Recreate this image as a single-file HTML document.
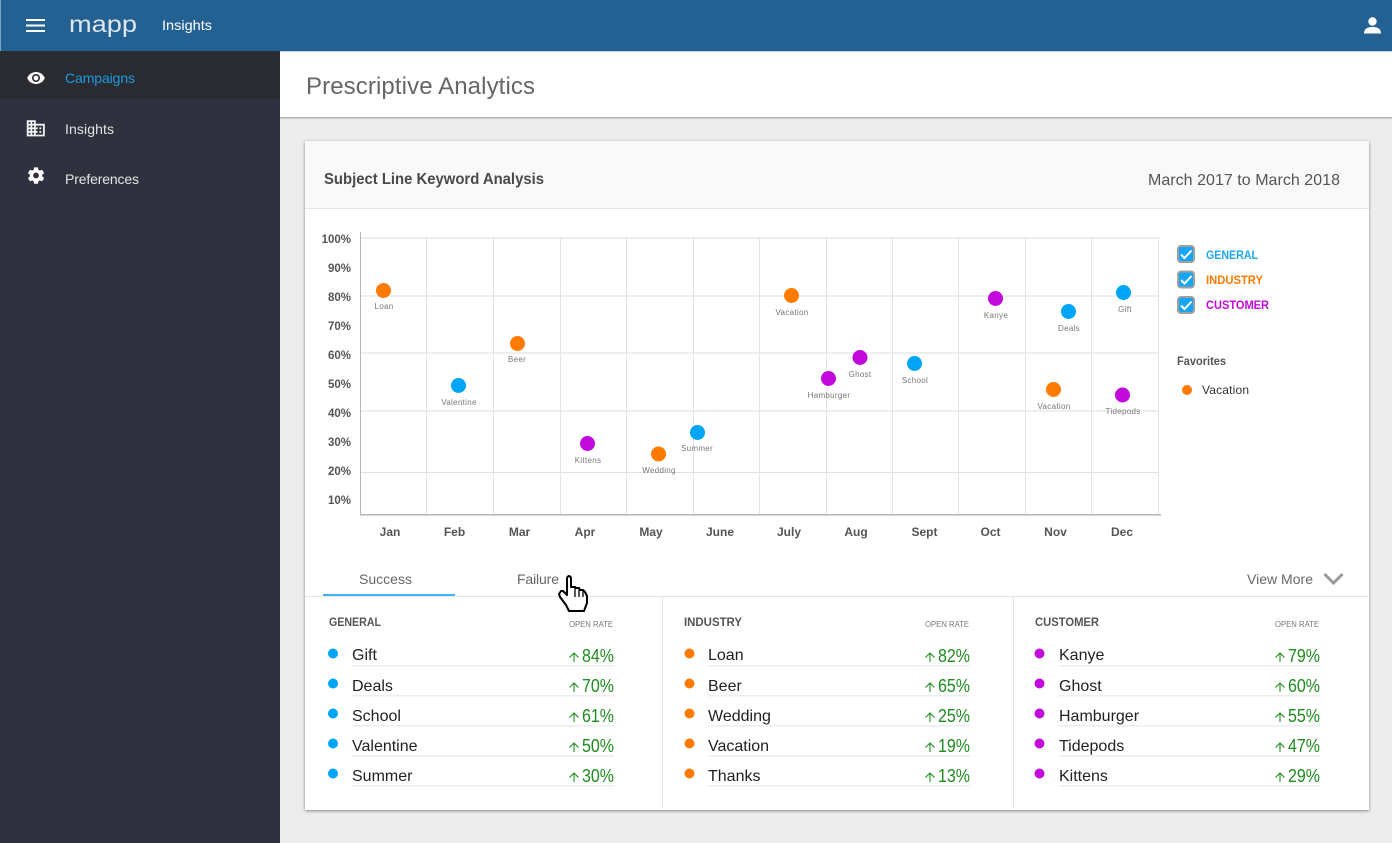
<!DOCTYPE html>
<html lang="en"><head><meta charset="utf-8"><title>Prescriptive Analytics</title>
<style>
html,body{margin:0;padding:0;width:1392px;height:843px;overflow:hidden;background:#ededed;font-family:"Liberation Sans",sans-serif}
.a{position:absolute}
svg{position:absolute;left:0;top:0}
text{font-family:"Liberation Sans",sans-serif}
.ax{font-size:12px;font-weight:bold;fill:#555}
.ay{font-size:11.500px;font-weight:bold;fill:#555;text-anchor:end}
.lb{font-size:8px;fill:#777;text-anchor:middle;letter-spacing:.3px}
.nm{font-size:16px;fill:#222}
.pc{font-size:18px;fill:#1e8c1e}
.hd{font-size:12px;font-weight:bold;fill:#555}
.or{font-size:8px;fill:#777}
.ul{fill:#eeeeee}
.arr{fill:none;stroke:#1e8c1e;stroke-width:1.100}
.b{fill:#00a5f7}.o{fill:#ff7a00}.p{fill:#c209dc}
</style></head><body>
<div class="a" style="left:0;top:0;width:1392px;height:51px;background:#236193"></div>
<div class="a" style="left:0;top:0;width:1px;height:51px;background:#7fa3c0"></div>
<div class="a" style="left:280px;top:51px;width:1112px;height:67px;background:#fff;border-bottom:1px solid #b5b5b5;border-top:1px solid #b7cbdb;box-sizing:border-box;box-shadow:0 1px 1px rgba(0,0,0,.14)"></div>
<div class="a" style="left:0;top:51px;width:280px;height:792px;background:#2f323e"></div>
<div class="a" style="left:0;top:51px;width:280px;height:48px;background:#2a2b30"></div>
<div class="a" style="left:305px;top:141px;width:1064px;height:669px;background:#fff;box-shadow:0 1px 3px rgba(0,0,0,.45)"></div>
<div class="a" style="left:305px;top:141px;width:1064px;height:68px;background:#f9f9f9;border-bottom:1px solid #e4e4e4;box-sizing:border-box"></div>
<svg width="1392" height="843" viewBox="0 0 1392 843">
<!-- top bar -->
<rect x="26" y="19" width="19" height="2" fill="#fff"/><rect x="26" y="24.500" width="19" height="2" fill="#fff"/><rect x="26" y="30" width="19" height="2" fill="#fff"/>
<text x="69" y="32" font-size="23" fill="#fff" opacity=".85" textLength="68" lengthAdjust="spacingAndGlyphs">mapp</text>
<text x="162" y="30" font-size="14" fill="#fff" textLength="50" lengthAdjust="spacingAndGlyphs">Insights</text>
<circle cx="1372.500" cy="21.500" r="4.200" fill="#fff"/>
<path d="M1364 33.500Q1364 27 1372.500 27Q1381 27 1381 33.500Z" fill="#fff"/>
<!-- sidebar -->
<path transform="translate(26.400 68.400) scale(.8)" fill="#fff" d="M12 4.500C7 4.500 2.730 7.610 1 12c1.730 4.390 6 7.500 11 7.500s9.270-3.110 11-7.500c-1.730-4.390-6-7.500-11-7.500zM12 17c-2.760 0-5-2.240-5-5s2.240-5 5-5 5 2.240 5 5-2.240 5-5 5zm0-8c-1.660 0-3 1.340-3 3s1.340 3 3 3 3-1.340 3-3-1.340-3-3-3z"/>
<path transform="translate(25 117.500) scale(.9)" fill="#f2f2f2" d="M12 7V3H2v18h20V7H12zM6 19H4v-2h2v2zm0-4H4v-2h2v2zm0-4H4V9h2v2zm0-4H4V5h2v2zm4 12H8v-2h2v2zm0-4H8v-2h2v2zm0-4H8V9h2v2zm0-4H8V5h2v2zm10 12h-8v-2h2v-2h-2v-2h2v-2h-2V9h8v10zm-2-8h-2v2h2v-2zm0 4h-2v2h2v-2z"/>
<path transform="translate(26.200 165.700) scale(.82)" fill="#fff" d="M19.430 12.980c.04-.32.07-.64.07-.98s-.03-.66-.07-.98l2.110-1.650c.19-.15.24-.42.12-.64l-2-3.460c-.12-.22-.39-.3-.61-.22l-2.490 1c-.52-.4-1.080-.73-1.690-.98l-.38-2.650C14.460 2.180 14.250 2 14 2h-4c-.25 0-.46.18-.49.42l-.38 2.650c-.61.25-1.170.59-1.690.98l-2.490-1c-.23-.09-.49 0-.61.22l-2 3.460c-.13.22-.07.49.12.64l2.110 1.650c-.04.32-.07.65-.07.98s.03.66.07.98l-2.110 1.650c-.19.15-.24.42-.12.64l2 3.460c.12.22.39.3.61.22l2.490-1c.52.4 1.080.73 1.690.98l.38 2.650c.03.24.24.42.49.42h4c.25 0 .46-.18.49-.42l.38-2.650c.61-.25 1.170-.59 1.690-.98l2.490 1c.23.09.49 0 .61-.22l2-3.460c.12-.22.07-.49-.12-.64l-2.110-1.650zM12 15.500c-1.930 0-3.500-1.570-3.500-3.500s1.570-3.500 3.500-3.500 3.500 1.570 3.500 3.500-1.570 3.500-3.500 3.500z"/>
<text x="65" y="83" font-size="14" fill="#1a9ae0" textLength="70">Campaigns</text>
<text x="65" y="134" font-size="14" fill="#e4e4e4" textLength="49">Insights</text>
<text x="65" y="184" font-size="14" fill="#e4e4e4" textLength="74">Preferences</text>
<!-- headings -->
<text x="306" y="94" font-size="24" fill="#666" textLength="229">Prescriptive Analytics</text>
<text x="324" y="184" font-size="16" font-weight="bold" fill="#4a4a4a" textLength="220" lengthAdjust="spacingAndGlyphs">Subject Line Keyword Analysis</text>
<text x="1148" y="185" font-size="16" fill="#555" textLength="192">March 2017 to March 2018</text>
<!-- grid -->
<g fill="#eeeeee"><rect x="361" y="237" width="798" height="2"/><rect x="361" y="295" width="798" height="2"/><rect x="361" y="352" width="798" height="2"/><rect x="361" y="410" width="798" height="2"/><rect x="361" y="472" width="798" height="1" fill="#e2e2e2"/></g>
<g fill="#e4e4e4"><rect x="426" y="237" width="1" height="277"/><rect x="493" y="237" width="1" height="277"/><rect x="560" y="237" width="1" height="277"/><rect x="626" y="237" width="1" height="277"/><rect x="693" y="237" width="1" height="277"/><rect x="759" y="237" width="1" height="277"/><rect x="826" y="237" width="1" height="277"/><rect x="892" y="237" width="1" height="277"/><rect x="958" y="237" width="1" height="277"/><rect x="1025" y="237" width="1" height="277"/><rect x="1091" y="237" width="1" height="277"/><rect x="1158" y="237" width="1" height="277"/></g>
<rect x="360" y="232" width="1" height="283" fill="#b5b5b5"/><rect x="360" y="514" width="801" height="1.500" fill="#b5b5b5"/>
<g><text class="ay" x="351" y="243">100%</text><text class="ay" x="351" y="272">90%</text><text class="ay" x="351" y="301">80%</text><text class="ay" x="351" y="330">70%</text><text class="ay" x="351" y="359">60%</text><text class="ay" x="351" y="388">50%</text><text class="ay" x="351" y="417">40%</text><text class="ay" x="351" y="446">30%</text><text class="ay" x="351" y="475">20%</text><text class="ay" x="351" y="504">10%</text></g>
<g text-anchor="middle"><text class="ax" x="390" y="536">Jan</text><text class="ax" x="454.500" y="536">Feb</text><text class="ax" x="519.500" y="536">Mar</text><text class="ax" x="585" y="536">Apr</text><text class="ax" x="651" y="536">May</text><text class="ax" x="720" y="536">June</text><text class="ax" x="789" y="536">July</text><text class="ax" x="856" y="536">Aug</text><text class="ax" x="924.500" y="536">Sept</text><text class="ax" x="990.500" y="536">Oct</text><text class="ax" x="1055.500" y="536">Nov</text><text class="ax" x="1122" y="536">Dec</text></g>
<!-- points -->
<circle class="o" cx="383.500" cy="290.500" r="7.500"/><text class="lb" x="384" y="309">Loan</text>
<circle class="b" cx="458.500" cy="385.500" r="7.500"/><text class="lb" x="459" y="405">Valentine</text>
<circle class="o" cx="517.500" cy="343.500" r="7.500"/><text class="lb" x="517" y="362">Beer</text>
<circle class="p" cx="587.500" cy="443.500" r="7.500"/><text class="lb" x="588" y="463">Kittens</text>
<circle class="o" cx="658.500" cy="454" r="7.500"/><text class="lb" x="659" y="473">Wedding</text>
<circle class="b" cx="697.500" cy="432.500" r="7.500"/><text class="lb" x="697" y="451">Summer</text>
<circle class="o" cx="791.500" cy="295.500" r="7.500"/><text class="lb" x="792" y="315">Vacation</text>
<circle class="p" cx="828.500" cy="378.500" r="7.500"/><text class="lb" x="829" y="398">Hamburger</text>
<circle class="p" cx="860" cy="357.500" r="7.500"/><text class="lb" x="860" y="377">Ghost</text>
<circle class="b" cx="914.500" cy="363.500" r="7.500"/><text class="lb" x="915" y="383">School</text>
<circle class="p" cx="995.500" cy="298.500" r="7.500"/><text class="lb" x="996" y="318">Kanye</text>
<circle class="o" cx="1053.500" cy="389.500" r="7.500"/><text class="lb" x="1054" y="409">Vacation</text>
<circle class="b" cx="1068.500" cy="311.500" r="7.500"/><text class="lb" x="1069" y="331">Deals</text>
<circle class="b" cx="1123.500" cy="292.500" r="7.500"/><text class="lb" x="1125" y="312">Gift</text>
<circle class="p" cx="1122.500" cy="395" r="7.500"/><text class="lb" x="1123" y="414">Tidepods</text>
<!-- legend -->
<g stroke="#a0a0a0" stroke-width="2" fill="#14a6f5"><rect x="1178" y="246" width="16" height="16" rx="3"/><rect x="1178" y="271.500" width="16" height="16" rx="3"/><rect x="1178" y="297" width="16" height="16" rx="3"/></g>
<g fill="none" stroke="#fff" stroke-width="2"><path d="M1181 254.500l3.500 3.500 7-7.500"/><path d="M1181 280l3.500 3.500 7-7.500"/><path d="M1181 305.500l3.500 3.500 7-7.500"/></g>
<text x="1206" y="259" font-size="12" font-weight="bold" fill="#1ea7ef" textLength="52" lengthAdjust="spacingAndGlyphs">GENERAL</text>
<text x="1206" y="284" font-size="12" font-weight="bold" fill="#ff7a00" textLength="57" lengthAdjust="spacingAndGlyphs">INDUSTRY</text>
<text x="1206" y="309" font-size="12" font-weight="bold" fill="#c209dc" textLength="63" lengthAdjust="spacingAndGlyphs">CUSTOMER</text>
<text x="1177" y="365" font-size="12" font-weight="bold" fill="#555" textLength="49" lengthAdjust="spacingAndGlyphs">Favorites</text>
<circle class="o" cx="1187" cy="390" r="5"/><text x="1202" y="394" font-size="12" fill="#333" textLength="47">Vacation</text>
<!-- tabs -->
<rect x="305" y="596" width="1064" height="1" fill="#e6e6e6"/>
<rect x="323" y="594" width="132" height="2" fill="#3db5f5"/>
<text x="359" y="584" font-size="14" fill="#666" textLength="53">Success</text>
<text x="517" y="584" font-size="14" fill="#666" textLength="42">Failure</text>
<text x="1247" y="584" font-size="14" fill="#666" textLength="66">View More</text>
<path d="M1324.500 574l9 9 9-9" fill="none" stroke="#999" stroke-width="3"/>
<rect x="662" y="597" width="1" height="211" fill="#e6e6e6"/><rect x="1013" y="597" width="1" height="211" fill="#e6e6e6"/>
<!-- column 1 -->
<text class="hd" x="329" y="626" textLength="52" lengthAdjust="spacingAndGlyphs">GENERAL</text><text class="or" x="569" y="627" textLength="44" lengthAdjust="spacingAndGlyphs">OPEN RATE</text>
<g class="b"><circle cx="333" cy="653.500" r="5"/><circle cx="333" cy="683.500" r="5"/><circle cx="333" cy="713.500" r="5"/><circle cx="333" cy="743.500" r="5"/><circle cx="333" cy="773.500" r="5"/></g>
<text class="nm" x="352" y="660">Gift</text><text class="nm" x="352" y="691">Deals</text><text class="nm" x="352" y="721">School</text><text class="nm" x="352" y="751">Valentine</text><text class="nm" x="352" y="781">Summer</text>
<text class="pc" x="582" y="662" textLength="32" lengthAdjust="spacingAndGlyphs">84%</text><text class="pc" x="582" y="692" textLength="32" lengthAdjust="spacingAndGlyphs">70%</text><text class="pc" x="582" y="722" textLength="32" lengthAdjust="spacingAndGlyphs">61%</text><text class="pc" x="582" y="752" textLength="32" lengthAdjust="spacingAndGlyphs">50%</text><text class="pc" x="582" y="782" textLength="32" lengthAdjust="spacingAndGlyphs">30%</text>
<rect class="ul" x="352" y="665" width="262" height="1.500"/><rect class="ul" x="352" y="695" width="262" height="1.500"/><rect class="ul" x="352" y="725" width="262" height="1.500"/><rect class="ul" x="352" y="755" width="262" height="1.500"/><rect class="ul" x="352" y="785" width="262" height="1.500"/>
<g class="arr"><path d="M574 662v-9M569.500 657.500l4.500-4.500 4.500 4.500"/><path d="M574 692v-9M569.500 687.500l4.500-4.500 4.500 4.500"/><path d="M574 722v-9M569.500 717.500l4.500-4.500 4.500 4.500"/><path d="M574 752v-9M569.500 747.500l4.500-4.500 4.500 4.500"/><path d="M574 782v-9M569.500 777.500l4.500-4.500 4.500 4.500"/></g>
<!-- column 2 -->
<text class="hd" x="684" y="626" textLength="58" lengthAdjust="spacingAndGlyphs">INDUSTRY</text><text class="or" x="925" y="627" textLength="44" lengthAdjust="spacingAndGlyphs">OPEN RATE</text>
<g class="o"><circle cx="689.500" cy="653.500" r="5"/><circle cx="689.500" cy="683.500" r="5"/><circle cx="689.500" cy="713.500" r="5"/><circle cx="689.500" cy="743.500" r="5"/><circle cx="689.500" cy="773.500" r="5"/></g>
<text class="nm" x="708" y="660">Loan</text><text class="nm" x="708" y="691">Beer</text><text class="nm" x="708" y="721">Wedding</text><text class="nm" x="708" y="751">Vacation</text><text class="nm" x="708" y="781">Thanks</text>
<text class="pc" x="938" y="662" textLength="32" lengthAdjust="spacingAndGlyphs">82%</text><text class="pc" x="938" y="692" textLength="32" lengthAdjust="spacingAndGlyphs">65%</text><text class="pc" x="938" y="722" textLength="32" lengthAdjust="spacingAndGlyphs">25%</text><text class="pc" x="938" y="752" textLength="32" lengthAdjust="spacingAndGlyphs">19%</text><text class="pc" x="938" y="782" textLength="32" lengthAdjust="spacingAndGlyphs">13%</text>
<rect class="ul" x="708" y="665" width="262" height="1.500"/><rect class="ul" x="708" y="695" width="262" height="1.500"/><rect class="ul" x="708" y="725" width="262" height="1.500"/><rect class="ul" x="708" y="755" width="262" height="1.500"/><rect class="ul" x="708" y="785" width="262" height="1.500"/>
<g class="arr"><path d="M930 662v-9M925.500 657.500l4.500-4.500 4.500 4.500"/><path d="M930 692v-9M925.500 687.500l4.500-4.500 4.500 4.500"/><path d="M930 722v-9M925.500 717.500l4.500-4.500 4.500 4.500"/><path d="M930 752v-9M925.500 747.500l4.500-4.500 4.500 4.500"/><path d="M930 782v-9M925.500 777.500l4.500-4.500 4.500 4.500"/></g>
<!-- column 3 -->
<text class="hd" x="1035" y="626" textLength="64" lengthAdjust="spacingAndGlyphs">CUSTOMER</text><text class="or" x="1275" y="627" textLength="44" lengthAdjust="spacingAndGlyphs">OPEN RATE</text>
<g class="p"><circle cx="1039.500" cy="653.500" r="5"/><circle cx="1039.500" cy="683.500" r="5"/><circle cx="1039.500" cy="713.500" r="5"/><circle cx="1039.500" cy="743.500" r="5"/><circle cx="1039.500" cy="773.500" r="5"/></g>
<text class="nm" x="1059" y="660">Kanye</text><text class="nm" x="1059" y="691">Ghost</text><text class="nm" x="1059" y="721">Hamburger</text><text class="nm" x="1059" y="751">Tidepods</text><text class="nm" x="1059" y="781">Kittens</text>
<text class="pc" x="1288" y="662" textLength="32" lengthAdjust="spacingAndGlyphs">79%</text><text class="pc" x="1288" y="692" textLength="32" lengthAdjust="spacingAndGlyphs">60%</text><text class="pc" x="1288" y="722" textLength="32" lengthAdjust="spacingAndGlyphs">55%</text><text class="pc" x="1288" y="752" textLength="32" lengthAdjust="spacingAndGlyphs">47%</text><text class="pc" x="1288" y="782" textLength="32" lengthAdjust="spacingAndGlyphs">29%</text>
<rect class="ul" x="1059" y="665" width="261" height="1.500"/><rect class="ul" x="1059" y="695" width="261" height="1.500"/><rect class="ul" x="1059" y="725" width="261" height="1.500"/><rect class="ul" x="1059" y="755" width="261" height="1.500"/><rect class="ul" x="1059" y="785" width="261" height="1.500"/>
<g class="arr"><path d="M1280 662v-9M1275.500 657.500l4.500-4.500 4.500 4.500"/><path d="M1280 692v-9M1275.500 687.500l4.500-4.500 4.500 4.500"/><path d="M1280 722v-9M1275.500 717.500l4.500-4.500 4.500 4.500"/><path d="M1280 752v-9M1275.500 747.500l4.500-4.500 4.500 4.500"/><path d="M1280 782v-9M1275.500 777.500l4.500-4.500 4.500 4.500"/></g>
<!-- hand cursor -->
<path d="M567 593V578Q569 574 571 578V587H575L576 588H579L580 590H583L585 592L587 596V603L584 611H569L566 605L560 597L559 594L561 591H563L567 595Z" fill="#fff" stroke="#000" stroke-width="2" stroke-linejoin="round"/>
<path d="M575 588V597M579 589V597M583 591V597" stroke="#000" stroke-width="1.300" fill="none"/>
</svg>
</body></html>
